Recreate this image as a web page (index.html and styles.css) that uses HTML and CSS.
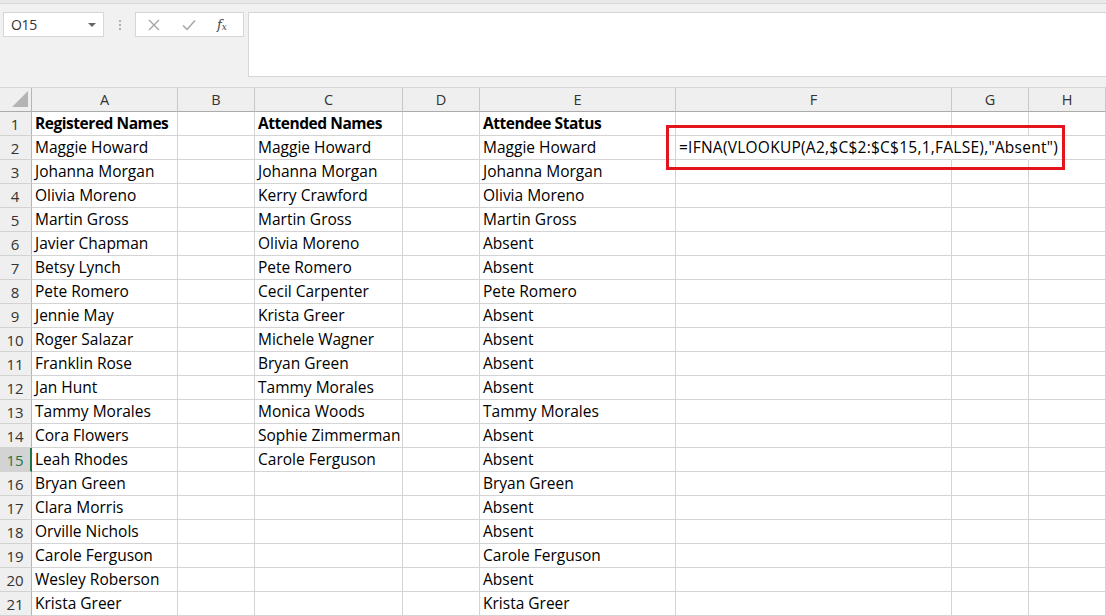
FILE: index.html
```html
<!DOCTYPE html>
<html>
<head>
<meta charset="utf-8">
<link rel="stylesheet" href="styles.css">
</head>
<body>
<div class="app">
  <div class="toolbar">
    <div class="topstrip"></div>
    <div class="fbar">
      <div class="namebox">
        <span class="nb-text">O15</span>
        <span class="nb-arrow"></span>
      </div>
      <div class="grip"><i></i><i></i><i></i></div>
      <div class="fxbox">
        <svg class="ico" width="14" height="14" viewBox="0 0 14 14"><path d="M2 2L12 12M12 2L2 12" stroke="#a6a6a6" stroke-width="1.4" fill="none"/></svg>
        <svg class="ico" width="16" height="14" viewBox="0 0 16 14"><path d="M2 7.5L6 11.5L14 2.5" stroke="#a6a6a6" stroke-width="1.5" fill="none"/></svg>
        <span class="fx">f<sub>x</sub></span>
      </div>
      <div class="finput"></div>
    </div>
  </div>

  <div class="sheet">
    <div class="row head">
      <div class="rh corner"><span class="tri"></span></div>
      <div class="ch">A</div><div class="ch">B</div><div class="ch">C</div><div class="ch">D</div><div class="ch">E</div><div class="ch">F</div><div class="ch">G</div><div class="ch">H</div>
    </div>
    <div class="row"><div class="rh">1</div><div class="c b">Registered Names</div><div class="c"></div><div class="c b">Attended Names</div><div class="c"></div><div class="c b">Attendee Status</div><div class="c"></div><div class="c"></div><div class="c"></div></div>
    <div class="row"><div class="rh">2</div><div class="c">Maggie Howard</div><div class="c"></div><div class="c">Maggie Howard</div><div class="c"></div><div class="c">Maggie Howard</div><div class="c over">=IFNA(VLOOKUP(A2,$C$2:$C$15,1,FALSE),"Absent")</div><div class="c nr"></div><div class="c"></div></div>
    <div class="row"><div class="rh">3</div><div class="c">Johanna Morgan</div><div class="c"></div><div class="c">Johanna Morgan</div><div class="c"></div><div class="c">Johanna Morgan</div><div class="c"></div><div class="c"></div><div class="c"></div></div>
    <div class="row"><div class="rh">4</div><div class="c">Olivia Moreno</div><div class="c"></div><div class="c">Kerry Crawford</div><div class="c"></div><div class="c">Olivia Moreno</div><div class="c"></div><div class="c"></div><div class="c"></div></div>
    <div class="row"><div class="rh">5</div><div class="c">Martin Gross</div><div class="c"></div><div class="c">Martin Gross</div><div class="c"></div><div class="c">Martin Gross</div><div class="c"></div><div class="c"></div><div class="c"></div></div>
    <div class="row"><div class="rh">6</div><div class="c">Javier Chapman</div><div class="c"></div><div class="c">Olivia Moreno</div><div class="c"></div><div class="c">Absent</div><div class="c"></div><div class="c"></div><div class="c"></div></div>
    <div class="row"><div class="rh">7</div><div class="c">Betsy Lynch</div><div class="c"></div><div class="c">Pete Romero</div><div class="c"></div><div class="c">Absent</div><div class="c"></div><div class="c"></div><div class="c"></div></div>
    <div class="row"><div class="rh">8</div><div class="c">Pete Romero</div><div class="c"></div><div class="c">Cecil Carpenter</div><div class="c"></div><div class="c">Pete Romero</div><div class="c"></div><div class="c"></div><div class="c"></div></div>
    <div class="row"><div class="rh">9</div><div class="c">Jennie May</div><div class="c"></div><div class="c">Krista Greer</div><div class="c"></div><div class="c">Absent</div><div class="c"></div><div class="c"></div><div class="c"></div></div>
    <div class="row"><div class="rh">10</div><div class="c">Roger Salazar</div><div class="c"></div><div class="c">Michele Wagner</div><div class="c"></div><div class="c">Absent</div><div class="c"></div><div class="c"></div><div class="c"></div></div>
    <div class="row"><div class="rh">11</div><div class="c">Franklin Rose</div><div class="c"></div><div class="c">Bryan Green</div><div class="c"></div><div class="c">Absent</div><div class="c"></div><div class="c"></div><div class="c"></div></div>
    <div class="row"><div class="rh">12</div><div class="c">Jan Hunt</div><div class="c"></div><div class="c">Tammy Morales</div><div class="c"></div><div class="c">Absent</div><div class="c"></div><div class="c"></div><div class="c"></div></div>
    <div class="row"><div class="rh">13</div><div class="c">Tammy Morales</div><div class="c"></div><div class="c">Monica Woods</div><div class="c"></div><div class="c">Tammy Morales</div><div class="c"></div><div class="c"></div><div class="c"></div></div>
    <div class="row"><div class="rh">14</div><div class="c">Cora Flowers</div><div class="c"></div><div class="c">Sophie Zimmerman</div><div class="c"></div><div class="c">Absent</div><div class="c"></div><div class="c"></div><div class="c"></div></div>
    <div class="row"><div class="rh sel">15</div><div class="c">Leah Rhodes</div><div class="c"></div><div class="c">Carole Ferguson</div><div class="c"></div><div class="c">Absent</div><div class="c"></div><div class="c"></div><div class="c"></div></div>
    <div class="row"><div class="rh">16</div><div class="c">Bryan Green</div><div class="c"></div><div class="c"></div><div class="c"></div><div class="c">Bryan Green</div><div class="c"></div><div class="c"></div><div class="c"></div></div>
    <div class="row"><div class="rh">17</div><div class="c">Clara Morris</div><div class="c"></div><div class="c"></div><div class="c"></div><div class="c">Absent</div><div class="c"></div><div class="c"></div><div class="c"></div></div>
    <div class="row"><div class="rh">18</div><div class="c">Orville Nichols</div><div class="c"></div><div class="c"></div><div class="c"></div><div class="c">Absent</div><div class="c"></div><div class="c"></div><div class="c"></div></div>
    <div class="row"><div class="rh">19</div><div class="c">Carole Ferguson</div><div class="c"></div><div class="c"></div><div class="c"></div><div class="c">Carole Ferguson</div><div class="c"></div><div class="c"></div><div class="c"></div></div>
    <div class="row"><div class="rh">20</div><div class="c">Wesley Roberson</div><div class="c"></div><div class="c"></div><div class="c"></div><div class="c">Absent</div><div class="c"></div><div class="c"></div><div class="c"></div></div>
    <div class="row"><div class="rh">21</div><div class="c">Krista Greer</div><div class="c"></div><div class="c"></div><div class="c"></div><div class="c">Krista Greer</div><div class="c"></div><div class="c"></div><div class="c"></div></div>
    <div class="callout"></div>
  </div>
</div>
</body>
</html>
```

FILE: styles.css
```css
* { box-sizing: border-box; }
html, body { margin: 0; padding: 0; }
body {
  width: 1106px;
  height: 616px;
  overflow: hidden;
  background: #ffffff;
  font-family: "Open Sans", "Liberation Sans", sans-serif;
}
.app { width: 1106px; height: 616px; overflow: hidden; }

.toolbar {
  height: 88px;
  background: #f1f1f1;
  border-bottom: 1px solid #d6d6d6;
}
.topstrip {
  height: 4px;
  background: #e9e9e9;
  border-bottom: 1px solid #d7d7d7;
}
.fbar {
  display: flex;
  align-items: flex-start;
  padding: 8px 0 0 3px;
}
.namebox {
  width: 101px;
  height: 25px;
  background: #ffffff;
  border: 1px solid #d6d6d6;
  display: flex;
  align-items: center;
  justify-content: space-between;
  padding: 0 7px 0 7px;
}
.nb-text { font-size: 14px; color: #333; letter-spacing: -0.3px; }
.nb-arrow {
  width: 0; height: 0;
  border-left: 4px solid transparent;
  border-right: 4px solid transparent;
  border-top: 4px solid #666;
}
.grip {
  width: 31px;
  height: 25px;
  display: flex;
  flex-direction: column;
  align-items: center;
  justify-content: center;
  gap: 2px;
}
.grip i { display: block; width: 2px; height: 2px; background: #b0b0b0; }
.fxbox {
  width: 109px;
  height: 25px;
  background: #ffffff;
  border: 1px solid #d6d6d6;
  display: flex;
  align-items: center;
  padding: 0 0 0 11px;
}
.fxbox .ico:first-child { margin-right: 20px; }
.fxbox .ico:nth-child(2) { margin-right: 20px; }
.fx {
  font-family: "DejaVu Serif", "Liberation Serif", serif;
  font-style: italic;
  font-size: 13px;
  color: #444;
  line-height: 1;
}
.fx sub { font-size: 9px; vertical-align: -1px; }
.finput {
  flex: 1;
  margin-left: 4px;
  height: 65px;
  background: #ffffff;
  border: 1px solid #d6d6d6;
  border-right: none;
}

.sheet { position: relative; }
.row {
  display: grid;
  grid-template-columns: 32px 146px 77px 148px 77px 196px 276px 77px 77px;
  height: 24px;
}
.rh {
  background: #efefef;
  border-right: 1px solid #b6b6b6;
  border-bottom: 1px solid #d2d2d2;
  color: #333;
  font-size: 15px;
  display: flex;
  align-items: center;
  justify-content: center;
  padding-right: 1px;
}
.rh.sel {
  background: #d3d3d3;
  color: #217346;
  border-right: 2px solid #217346;
  padding-right: 0;
}
.head .ch {
  background: #efefef;
  border-right: 1px solid #c8c8c8;
  border-bottom: 1px solid #ababab;
  color: #333;
  font-size: 14.5px;
  display: flex;
  align-items: center;
  justify-content: center;
}
.head .rh { border-bottom: 1px solid #ababab; }
.corner { position: relative; }
.tri {
  position: absolute;
  right: 3px;
  bottom: 4px;
  width: 0; height: 0;
  border-left: 16px solid transparent;
  border-bottom: 16px solid #b4b4b4;
}
.c {
  border-right: 1px solid #d4d4d4;
  border-bottom: 1px solid #d4d4d4;
  font-size: 15.5px;
  color: #000;
  padding: 0 0 1px 3px;
  display: flex;
  align-items: center;
  white-space: nowrap;
  overflow: hidden;
}
.c.b { font-weight: 700; letter-spacing: -0.45px; }
.c.over {
  overflow: visible;
  border-right-color: transparent;
  position: relative;
  z-index: 1;
  letter-spacing: 0.25px;
}
.c.nr { border-right-color: transparent; }

.callout {
  position: absolute;
  left: 666px;
  top: 37px;
  width: 399px;
  height: 45px;
  border: 3px solid #e3141b;
  z-index: 2;
}
```
